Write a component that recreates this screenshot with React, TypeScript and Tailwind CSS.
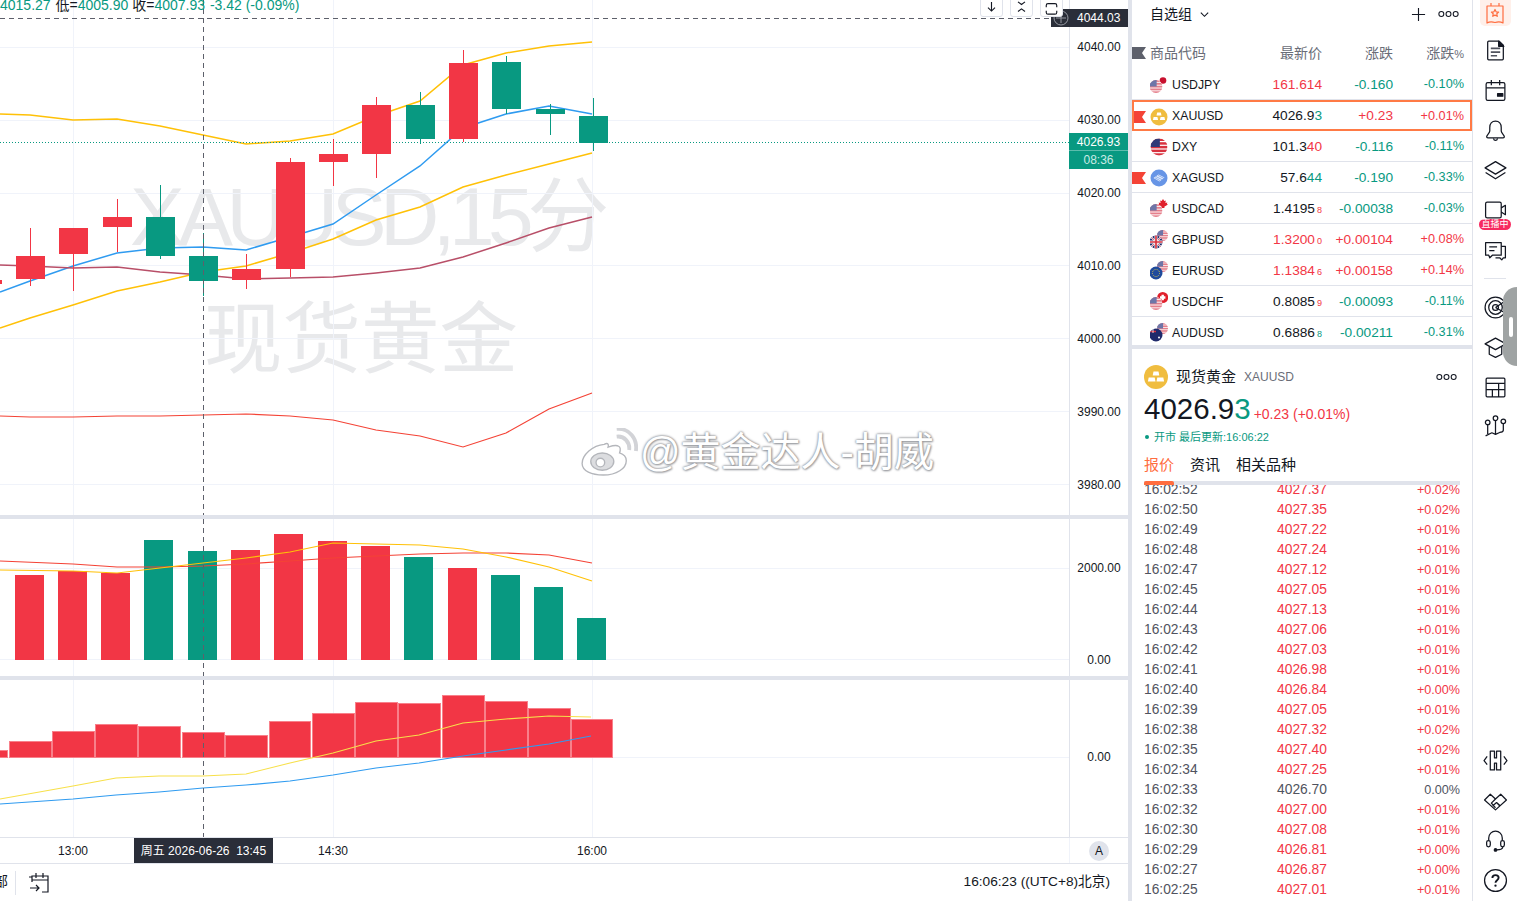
import React, { useId } from 'react';

const RED = '#f23645';
const GREEN = '#089981';
const YELLOW = '#ffc107';
const BLUE = '#2f9bf0';

type Candle = { x: number; hi: number; lo: number; top: number; bot: number; up: boolean };

const candles: Candle[] = [
  { x: 30, hi: 228, lo: 286, top: 256, bot: 279, up: true },
  { x: 73, hi: 228, lo: 291, top: 228, bot: 254, up: true },
  { x: 117, hi: 199, lo: 252, top: 217, bot: 227, up: true },
  { x: 160, hi: 185, lo: 259, top: 217, bot: 256, up: false },
  { x: 203, hi: 233, lo: 296, top: 256, bot: 281, up: false },
  { x: 246, hi: 254, lo: 289, top: 269, bot: 280, up: true },
  { x: 290, hi: 158, lo: 277, top: 162, bot: 269, up: true },
  { x: 333, hi: 139, lo: 186, top: 154, bot: 162, up: true },
  { x: 376, hi: 97, lo: 178, top: 105, bot: 154, up: true },
  { x: 420, hi: 92, lo: 144, top: 105, bot: 139, up: false },
  { x: 463, hi: 50, lo: 142, top: 63, bot: 139, up: true },
  { x: 506, hi: 56, lo: 114, top: 62, bot: 109, up: false },
  { x: 550, hi: 104, lo: 135, top: 109, bot: 114, up: false },
  { x: 593, hi: 98, lo: 151, top: 116, bot: 143, up: false },
];

const volumes: [number, number, boolean][] = [
  [15, 575, true], [58, 571, true], [101, 573, true], [144, 540, false], [188, 551, false],
  [231, 550, true], [274, 534, true], [318, 541, true], [361, 546, true], [404, 557, false],
  [448, 568, true], [491, 575, false], [534, 587, false], [577, 618, false],
];

const macd: [number, number, number][] = [
  [-35, 7, 750], [9, 51, 741], [52, 94, 731], [95, 137, 724], [138, 180, 726], [182, 224, 732], [225, 267, 735],
  [269, 310, 721], [312, 354, 713], [355, 397, 702], [398, 440, 703], [442, 484, 695], [485, 527, 701],
  [528, 570, 708], [571, 612, 719],
];

const bbUpper = '0,114 30,115 73,120 117,119 160,126 203,135 246,144 290,141 333,134 376,116 420,101 463,65 506,53 549,46 592,42';
const bbMid = '0,292 30,281 73,266 117,253 160,248 203,247 246,250 290,237 333,224 376,195 420,166 463,128 506,114 549,106 592,114';
const bbLower = '0,328 30,318 73,305 117,291 160,282 203,272 246,266 290,253 333,239 376,220 420,207 463,187 506,175 549,164 592,153';
const maLine = '0,265 30,266 73,268 117,267 160,272 203,275 246,279 290,278 333,277 376,273 420,268 463,257 506,243 549,228 592,217';
const redLine = '0,416 30,417 73,417 117,416 160,416 203,415 246,414 290,416 333,420 376,430 420,436 463,447 506,433 549,409 592,393';
const volRed = '0,561 73,564 117,567 160,567 203,566 246,564 290,561 333,558 376,556 420,554 463,553 506,553 549,555 592,563';
const volYellow = '0,570 73,571 117,573 160,568 203,563 246,558 290,552 333,543 376,544 420,545 463,549 506,557 549,567 592,581';
const macdYellow = '0,799 73,786 116,778 159,776 203,776 246,774 290,763 333,753 376,741 419,735 463,723 506,719 549,716 591,717';
const macdBlue = '0,804 73,799 116,795 159,792 203,788 246,785 290,781 333,775 376,768 419,763 463,756 506,750 549,744 591,736';

const VGrid = ({ y1, y2 }: { y1: number; y2: number }) => (
  <>
    {[73, 333, 592].map(x => (
      <line key={x} x1={x + 0.5} x2={x + 0.5} y1={y1} y2={y2} stroke="#f0f3fa" />
    ))}
  </>
);

const HGrid = ({ ys }: { ys: number[] }) => (
  <>
    {ys.map(y => (
      <line key={y} x1={0} x2={1069} y1={y + 0.5} y2={y + 0.5} stroke="#f0f3fa" />
    ))}
  </>
);

const Crosshair = ({ y1, y2 }: { y1: number; y2: number }) => (
  <line x1={203.5} x2={203.5} y1={y1} y2={y2} stroke="#5d606b" strokeDasharray="5 4" />
);

// ---- Symbol flags ----
const UsFlag = ({ x, y, r, faded }: { x: number; y: number; r: number; faded?: boolean }) => {
  const id = useId();
  const stripes = faded ? '#e57f8b' : '#d8323f';
  const canton = faded ? '#6d76a8' : '#2f3a78';
  return (
    <g>
      <clipPath id={id}>
        <circle cx={x} cy={y} r={r} />
      </clipPath>
      <g clipPath={`url(#${id})`}>
        <rect x={x - r} y={y - r} width={r * 2} height={r * 2} fill="#fff" />
        {[0, 1, 2, 3, 4].map(i => (
          <rect key={i} x={x - r} y={y - r + (i * 2 * r) / 4.6} width={r * 2} height={r / 3.4} fill={stripes} />
        ))}
        <rect x={x - r} y={y - r} width={r * 1.1} height={r} fill={canton} />
      </g>
    </g>
  );
};

const FlagIcon = ({ code }: { code: string }) => {
  const id = useId();
  let body: React.ReactNode = null;
  if (code === 'USDJPY') {
    body = (
      <>
        <circle cx={13} cy={5.5} r={4.5} fill="#fff" />
        <circle cx={13} cy={5.5} r={3.3} fill="#c8102e" />
        <UsFlag x={6} y={11.5} r={6.5} faded />
      </>
    );
  } else if (code === 'DXY') {
    body = <UsFlag x={9} y={10} r={8.5} />;
  } else if (code === 'XAUUSD') {
    body = (
      <>
        <circle cx={9} cy={10} r={8.5} fill="#f0bd3f" />
        <path d="M7.2 5.6h3.6l.7 3H6.5zM3.6 10h3.8l.7 3H2.9zM10.6 10h3.8l.7 3h-5.2z" fill="#fff" />
      </>
    );
  } else if (code === 'XAGUSD') {
    body = (
      <>
        <circle cx={9} cy={10} r={8.5} fill="#6795e6" />
        <path d="M3.5 10l5-3.6 6 3.2-5 3.8z" fill="#e8effc" />
        <path d="M6 8.6l6 3M8 7.4l6 3M5 9.8l5 2.8" stroke="#6795e6" strokeWidth={0.7} />
      </>
    );
  } else if (code === 'USDCAD') {
    body = (
      <>
        <path d="M13 0l1.300 2 1.500-.6-.4 2.600 1.900-.5-.4 1.500 1.100.6-3.700 2.200.2 1.200h-3l.2-1.200-3.700-2.200 1.100-.6-.4-1.500 1.900.5-.4-2.600 1.500.6z" fill="#e0202c" />
        <UsFlag x={6} y={11.5} r={6.5} faded />
      </>
    );
  } else if (code === 'USDCHF') {
    body = (
      <>
        <circle cx={12.7} cy={5.5} r={5.5} fill="#e0202c" />
        <path d="M11.500 2.800h2.400v1.500h1.500v2.400h-1.500v1.500h-2.400V6.700h-1.500V4.300h1.500z" fill="#fff" />
        <UsFlag x={6} y={11.5} r={6.5} faded />
      </>
    );
  } else {
    const r = 6.5;
    const cx = 6;
    const cy = 12;
    body = (
      <>
        <UsFlag x={12.5} y={5.5} r={5.5} faded />
        <clipPath id={id}>
          <circle cx={cx} cy={cy} r={r} />
        </clipPath>
        <g clipPath={`url(#${id})`}>
          {code === 'GBPUSD' && (
            <>
              <rect x={-1} y={5} width={14} height={14} fill="#1f2a6b" />
              <path d="M-1 5l14 14M13 5L-1 19" stroke="#fff" strokeWidth={1.800} />
              <path d="M-1 5l14 14M13 5L-1 19" stroke="#d8323f" strokeWidth={0.7} />
              <path d="M6 5v14M-1 12h14" stroke="#fff" strokeWidth={3} />
              <path d="M6 5v14M-1 12h14" stroke="#d8323f" strokeWidth={1.700} />
            </>
          )}
          {code === 'EURUSD' && (
            <>
              <rect x={-1} y={5} width={14} height={14} fill="#1f4a9c" />
              <circle cx={cx} cy={cy} r={3.600} fill="none" stroke="#e3c94a" strokeWidth={0.9} strokeDasharray="1 1" />
            </>
          )}
          {code === 'AUDUSD' && (
            <>
              <rect x={-1} y={5} width={14} height={14} fill="#1f2a6b" />
              <path d="M-1 8.500h7" stroke="#d8323f" strokeWidth={1.300} />
              <path d="M3 5v5" stroke="#f1f1f1" strokeWidth={0.9} />
              <circle cx={9} cy={14.500} r={1} fill="#fff" />
            </>
          )}
        </g>
      </>
    );
  }
  return (
    <svg viewBox="0 0 18 20" className="w-[18px] h-[20px] shrink-0">
      {body}
    </svg>
  );
};

const Marker = ({ color }: { color: string }) => (
  <svg viewBox="0 0 14 12" className="w-[14px] h-[12px] shrink-0">
    <path d="M0 0h14l-4 6 4 6H0z" fill={color} />
  </svg>
);

// ---- Watchlist ----
type Seg = { t: string; c: string; small?: boolean };
type Row = { code: string; price: Seg[]; chg: string; pct: string; up: boolean; flag?: boolean };

const K = '#131722';
const rows: Row[] = [
  { code: 'USDJPY', price: [{ t: '161.614', c: RED }], chg: '-0.160', pct: '-0.10%', up: false },
  { code: 'XAUUSD', price: [{ t: '4026.9', c: K }, { t: '3', c: GREEN }], chg: '+0.23', pct: '+0.01%', up: true, flag: true },
  { code: 'DXY', price: [{ t: '101.3', c: K }, { t: '40', c: RED }], chg: '-0.116', pct: '-0.11%', up: false },
  { code: 'XAGUSD', price: [{ t: '57.6', c: K }, { t: '44', c: GREEN }], chg: '-0.190', pct: '-0.33%', up: false, flag: true },
  { code: 'USDCAD', price: [{ t: '1.4195', c: K }, { t: '8', c: RED, small: true }], chg: '-0.00038', pct: '-0.03%', up: false },
  { code: 'GBPUSD', price: [{ t: '1.3200', c: RED }, { t: '0', c: RED, small: true }], chg: '+0.00104', pct: '+0.08%', up: true },
  { code: 'EURUSD', price: [{ t: '1.1384', c: RED }, { t: '6', c: RED, small: true }], chg: '+0.00158', pct: '+0.14%', up: true },
  { code: 'USDCHF', price: [{ t: '0.8085', c: K }, { t: '9', c: RED, small: true }], chg: '-0.00093', pct: '-0.11%', up: false },
  { code: 'AUDUSD', price: [{ t: '0.6886', c: K }, { t: '8', c: GREEN, small: true }], chg: '-0.00211', pct: '-0.31%', up: false },
];

const ticks: [string, string, string][] = [
  ['16:02:52', '4027.37', '+0.02%'], ['16:02:50', '4027.35', '+0.02%'], ['16:02:49', '4027.22', '+0.01%'],
  ['16:02:48', '4027.24', '+0.01%'], ['16:02:47', '4027.12', '+0.01%'], ['16:02:45', '4027.05', '+0.01%'],
  ['16:02:44', '4027.13', '+0.01%'], ['16:02:43', '4027.06', '+0.01%'], ['16:02:42', '4027.03', '+0.01%'],
  ['16:02:41', '4026.98', '+0.01%'], ['16:02:40', '4026.84', '+0.00%'], ['16:02:39', '4027.05', '+0.01%'],
  ['16:02:38', '4027.32', '+0.02%'], ['16:02:35', '4027.40', '+0.02%'], ['16:02:34', '4027.25', '+0.01%'],
  ['16:02:33', '4026.70', '0.00%'], ['16:02:32', '4027.00', '+0.01%'], ['16:02:30', '4027.08', '+0.01%'],
  ['16:02:29', '4026.81', '+0.00%'], ['16:02:27', '4026.87', '+0.00%'], ['16:02:25', '4027.01', '+0.01%'],
];

const WatchRow = ({ row }: { row: Row }) => {
  const selected = row.code === 'XAUUSD';
  const chgColor = row.up ? 'text-[#f23645]' : 'text-[#089981]';
  return (
    <div
      className={`flex items-center h-[31px] shrink-0 pt-[2px] pr-[8px] text-[13.7px] ${
        selected ? 'outline-2 -outline-offset-2 outline-[#ff7a45]' : 'border-b border-[#e0e3eb]'
      }`}
    >
      <div className="w-[18px] shrink-0">{row.flag && <Marker color="#f44336" />}</div>
      <FlagIcon code={row.code} />
      <span className="ml-[4px] text-[#131722] text-[12.3px]">{row.code}</span>
      <span className="flex-1 text-right flex justify-end items-baseline">
        {row.price.map((s, i) => (
          <span key={i} className={s.small ? 'text-[9px] ml-[2px]' : ''} style={{ color: s.c }}>
            {s.t}
          </span>
        ))}
      </span>
      <span className={`w-[71px] shrink-0 text-right ${chgColor}`}>{row.chg}</span>
      <span className={`w-[71px] shrink-0 text-right text-[12.7px] ${chgColor}`}>{row.pct}</span>
    </div>
  );
};

// ---- Right rail icons ----
const RailIcon = ({ h = 40, children, w = 25 }: { h?: number; w?: number; children: React.ReactNode }) => (
  <div className="flex items-center justify-center shrink-0" style={{ height: h }}>
    <svg viewBox="0 0 24 24" width={w} height={w} fill="none" stroke="#131722" strokeWidth={1.200} strokeLinejoin="round">
      {children}
    </svg>
  </div>
);

const Rail = () => (
  <div className="relative w-[45px] shrink-0 border-l border-[#e0e3eb] flex flex-col items-center bg-white">
    <div className="w-[31px] h-[26px] bg-[#fff0ea] rounded-b-[5px] flex items-end justify-center shrink-0">
      <svg viewBox="0 0 22 24" width={22} height={24} fill="none" stroke="#ff6d3f" strokeWidth={1.200} strokeLinejoin="round">
        <path d="M3 4h16v17c-2.500-1.500-5-1.500-8-.5-3-1-5.500-1-8 .5z" />
        <path d="M7 4V1M15 4V1" />
        <path d="M11 7.500l1.100 2.300 2.500.3-1.800 1.700.5 2.500-2.300-1.200-2.300 1.200.5-2.500-1.800-1.700 2.500-.3z" />
      </svg>
    </div>
    <RailIcon h={48}>
      <path d="M4.500 4a1 1 0 011-1h10l4 4v13a1 1 0 01-1 1h-13a1 1 0 01-1-1z" />
      <path d="M15 3l5 5h-5z" fill="#131722" />
      <path d="M7.500 10h9M7.500 13.500h9M7.500 17h6" strokeWidth={1.600} stroke="#50535e" />
    </RailIcon>
    <RailIcon h={32}>
      <rect x={3} y={4.500} width={18} height={17} rx={1.500} />
      <path d="M3 9.500h18M8 2v5M16 2v5" />
      <rect x={14} y={15} width={5} height={2.500} fill="#131722" />
    </RailIcon>
    <RailIcon h={48}>
      <path d="M12 3c-3.500 0-5.500 2.700-5.500 6v3.500c0 2-3 3.700-3 5.500 0 .7.500 1 1.200 1h14.600c.7 0 1.200-.3 1.200-1 0-1.800-3-3.500-3-5.500V9c0-3.300-2-6-5.500-6z" />
      <path d="M10 19.500c.3 1.300 1 2 2 2s1.700-.7 2-2" />
    </RailIcon>
    <RailIcon h={32}>
      <path d="M12 3.500l10 6-10 6-10-6z" />
      <path d="M2.500 14l9.500 6 9.500-6" />
    </RailIcon>
    <RailIcon h={48}>
      <rect x={2.500} y={4} width={15} height={15} rx={1.500} />
      <path d="M17.500 9.500l4-2.500v9l-4-2.500" />
    </RailIcon>
    <div className="-mt-[15px] w-[32px] h-[11px] rounded-full bg-[#f7295f] text-white text-[9px] leading-[11px] text-center shrink-0">
      直播中
    </div>
    <RailIcon h={40}>
      <path d="M2.500 4.500h15v12H9l-2.500 2.500-1-2.500h-3z" />
      <path d="M6 8.500h7.500M6 12h5" />
      <path d="M17.500 8h4v11h-2l-1.500 2-2-2h-4" />
    </RailIcon>
    <div className="w-[22px] border-t border-[#e0e3eb] mt-[8px] shrink-0" />
    <RailIcon h={56}>
      <circle cx={12} cy={12} r={10} />
      <circle cx={12} cy={12} r={6.500} />
      <circle cx={12} cy={12} r={2.800} />
      <path d="M12 12l9-6M12 12l9 5" stroke="#131722" />
    </RailIcon>
    <RailIcon h={24}>
      <path d="M12 3l10 5.500L12 14 2 8.500z" />
      <path d="M6 11v7.500l6 3 6-3V11" />
    </RailIcon>
    <RailIcon h={56}>
      <rect x={3} y={3} width={18} height={18} rx={1} />
      <path d="M3 8h18M3 14h18M9 14v7M15 8v13" />
    </RailIcon>
    <RailIcon h={20}>
      <circle cx={4.500} cy={9} r={2.200} />
      <circle cx={12} cy={5} r={2.200} />
      <circle cx={19.500} cy={8} r={2.200} />
      <path d="M4.500 11.200v9M12 7.200v13.300M19.500 10.200v6.300c0 1.500-2 2-3.500 2.200L12 20.500l-3.500-1.500-6 3" />
    </RailIcon>
    <div className="flex-1" />
    <RailIcon h={40}>
      <path d="M7 3h4v6.500h2V3h4v18h-4v-6.500h-2V21H7z" />
      <path d="M4 8l-3 4 3 4M20 8l3 4-3 4" />
    </RailIcon>
    <RailIcon h={40}>
      <path d="M12 21L1.500 11.500 7 6l5 4.500 5-4.500 5.500 5.500z" />
      <path d="M12 10.500l-4 4 2 2 3-2.500 3 3M9 16l3 3M13 14l3.500 3" />
    </RailIcon>
    <RailIcon h={40}>
      <path d="M5.500 12V9.500a6.500 6.500 0 0113 0V12" />
      <rect x={3.500} y={12} width={3.500} height={6} rx={1.700} />
      <rect x={17} y={12} width={3.500} height={6} rx={1.700} />
      <path d="M19 18c0 2-2.500 3-6 3" />
      <circle cx={12} cy={21} r={1.200} fill="#131722" />
    </RailIcon>
    <RailIcon h={40}>
      <circle cx={12} cy={12} r={10.500} />
      <path d="M9 9.500C9 7.700 10.300 6.800 12 6.800s3 1 3 2.600c0 2.300-3 2.300-3 4.800" strokeWidth={1.800} />
      <circle cx={12} cy={17} r={1.100} fill="#131722" stroke="none" />
    </RailIcon>
    <div className="h-[1px] shrink-0" />
    <div className="absolute right-0 top-[287px] w-[14px] h-[79px] bg-[#9fa3a3] rounded-l-[14px] flex items-center justify-center">
      <div className="w-[4px] h-[20px] rounded-full bg-white ml-[1px]" />
    </div>
  </div>
);

const axisLabel = 'text-[12px] text-[#131722] text-center';

const MainPane = () => (
  <div className="flex h-[515px] shrink-0 relative overflow-hidden">
    <div className="relative w-[1069px] shrink-0 overflow-hidden">
      <div className="absolute left-[130px] top-[172px] text-[82px] tracking-[-6.5px] leading-[90px] text-[#e8e9eb] whitespace-nowrap">
        XAUUSD,15分
      </div>
      <div className="absolute left-[204px] top-[295px] text-[78.5px] leading-[90px] text-[#e8e9eb] whitespace-nowrap">
        现货黄金
      </div>
      <svg viewBox="0 0 1069 515" className="absolute inset-0 w-[1069px] h-[515px]">
        <HGrid ys={[47, 120, 193, 265, 338, 411, 484]} />
        <VGrid y1={0} y2={515} />
        <rect x={0} y={280} width={2} height={4} fill={RED} />
        <polyline points={bbUpper} fill="none" stroke={YELLOW} strokeWidth={1.500} />
        <polyline points={bbMid} fill="none" stroke={BLUE} strokeWidth={1.500} />
        <polyline points={bbLower} fill="none" stroke={YELLOW} strokeWidth={1.500} />
        <polyline points={maLine} fill="none" stroke="#b84f68" strokeWidth={1.500} />
        <polyline points={redLine} fill="none" stroke="#f44336" strokeWidth={1.200} />
        <line x1={0} x2={1069} y1={142.5} y2={142.5} stroke={GREEN} strokeDasharray="1 2" />
        {candles.map(c => (
          <g key={c.x} fill={c.up ? RED : GREEN}>
            <rect x={c.x} y={c.hi} width={1} height={c.lo - c.hi} />
            <rect x={c.x - 14} y={c.top} width={29} height={c.bot - c.top} />
          </g>
        ))}
        <line x1={0} x2={1052} y1={18.5} y2={18.5} stroke="#5d606b" strokeDasharray="5 4" />
        <Crosshair y1={0} y2={515} />
      </svg>
      <div className="absolute left-0 -top-[3px] text-[14px] leading-[16px] whitespace-nowrap text-[#089981]">
        4015.27 <span className="text-[#131722] ml-[1px]">低=</span>4005.90 <span className="text-[#131722]">收=</span>4007.93 <span className="ml-[1px]">-3.42 (-0.09%)</span>
      </div>
    </div>
    <div className="w-[59px] shrink-0 border-l border-[#e0e3eb] flex flex-col pt-[10px]">
      {['4040.00', '4030.00', '4020.00', '4010.00', '4000.00', '3990.00', '3980.00'].map(v => (
        <div key={v} className={`h-[73px] shrink-0 flex items-center justify-center ${axisLabel}`}>{v}</div>
      ))}
    </div>
    <div className="absolute left-[1051px] top-[9px] w-[77px] h-[18px] bg-[#2a2e39] flex items-center text-white text-[12px]">
      <svg viewBox="0 0 16 16" width={16} height={16} fill="none" stroke="#9598a1" strokeWidth={1} className="ml-[2px]">
        <circle cx={8} cy={8} r={7} />
        <path d="M8 3v10M3 8h10" />
      </svg>
      <span className="ml-[8px]">4044.03</span>
    </div>
    <div className="absolute left-[980px] -top-[8px] flex gap-[7px]">
      {['M12 1v10.500M8 7.500l4 4 4-4', 'M8 1l4 3 4-3M8 12l4-3 4 3', 'M6 7V5a2 2 0 012-2h8a2 2 0 012 2v2M6 11v2a2 2 0 002 2h8a2 2 0 002-2v-2'].map(d => (
        <div key={d} className="w-[23px] h-[25px] bg-white border border-[#e0e3eb] rounded-[3px] flex items-end justify-center">
          <svg viewBox="0 0 24 16" width={24} height={16} fill="none" stroke="#131722" strokeWidth={1.300}>
            <path d={d} />
          </svg>
        </div>
      ))}
    </div>
    <div className="absolute left-[1069px] top-[133px] w-[59px] h-[36px] bg-[#089981] flex flex-col text-[12px] text-center">
      <div className="h-[18px] leading-[18px] text-white border-b border-[#5cbcac]">4026.93</div>
      <div className="h-[18px] leading-[18px] text-[#c9ebe5]">08:36</div>
    </div>
  </div>
);

const VolumePane = () => (
  <div className="flex h-[157px] shrink-0">
    <svg viewBox="0 519 1069 157" className="block w-[1069px] h-[157px] shrink-0">
      <HGrid ys={[568, 659]} />
      <VGrid y1={519} y2={676} />
      {volumes.map(([x, top, up]) => (
        <rect key={x} x={x} y={top} width={29} height={660 - top} fill={up ? RED : GREEN} />
      ))}
      <polyline points={volRed} fill="none" stroke="#f44336" strokeWidth={1.200} />
      <polyline points={volYellow} fill="none" stroke={YELLOW} strokeWidth={1.200} />
      <Crosshair y1={519} y2={676} />
    </svg>
    <div className="w-[59px] shrink-0 border-l border-[#e0e3eb] flex flex-col pt-[40px]">
      <div className={`h-[18px] leading-[18px] ${axisLabel}`}>2000.00</div>
      <div className={`h-[18px] leading-[18px] mt-[74px] ${axisLabel}`}>0.00</div>
    </div>
  </div>
);

const MacdPane = () => (
  <div className="flex h-[157px] shrink-0">
    <svg viewBox="0 680 1069 157" className="block w-[1069px] h-[157px] shrink-0">
      <HGrid ys={[757]} />
      <VGrid y1={680} y2={837} />
      {macd.map(([x1, x2, top]) => (
        <rect key={x1} x={x1 + 0.5} y={top + 0.5} width={x2 - x1} height={757 - top} fill={RED} stroke="#f8808a" strokeWidth={1} />
      ))}
      <polyline points={macdYellow} fill="none" stroke="#f7e04a" strokeWidth={1.200} />
      <polyline points={macdBlue} fill="none" stroke={BLUE} strokeWidth={1.200} />
      <Crosshair y1={680} y2={837} />
    </svg>
    <div className="w-[59px] shrink-0 border-l border-[#e0e3eb] flex flex-col pt-[68px]">
      <div className={`h-[18px] leading-[18px] ${axisLabel}`}>0.00</div>
    </div>
  </div>
);

const TimeAxis = () => (
  <div className="flex h-[27px] shrink-0 border-y border-[#e0e3eb]">
    <div className="relative w-[1069px] shrink-0 text-[12px] text-[#131722]">
      {[['13:00', 73], ['14:30', 333], ['16:00', 592]].map(([t, x]) => (
        <span key={t} className="absolute top-[4px] -translate-x-1/2" style={{ left: x as number }}>{t}</span>
      ))}
      <div className="absolute left-[134px] top-0 w-[139px] h-[25px] bg-[#2a2e39] text-white flex items-center justify-center whitespace-pre">
        周五 2026-06-26  13:45
      </div>
    </div>
    <div className="w-[59px] shrink-0 border-l border-[#f0f3fa] flex items-center justify-center">
      <div className="w-[20px] h-[20px] rounded-full bg-[#e0e3eb] text-[12px] flex items-center justify-center text-[#131722]">A</div>
    </div>
  </div>
);

const BottomBar = () => (
  <div className="flex-1 flex items-center text-[13.7px] text-[#131722] overflow-hidden">
    <div className="w-[16px] h-[24px] border-r border-[#e0e3eb] flex items-center justify-end pr-[7px] overflow-hidden shrink-0">
      <span className="shrink-0">部</span>
    </div>
    <svg viewBox="0 0 22 22" width={22} height={22} fill="none" stroke="#131722" strokeWidth={1.200} className="ml-[12px]">
      <path d="M4 10V4h16v16h-6M1 5h3M8 1v5M15 1v5M4 8h16" />
      <path d="M2 16h9M8 13l3 3-3 3" />
    </svg>
    <div className="flex-1" />
    <span className="mr-[18px]">16:06:23 ((UTC+8)北京)</span>
  </div>
);

const Dots = () => (
  <svg viewBox="0 0 22 8" width={21} height={8} fill="none" stroke="#131722" strokeWidth={1.100}>
    <circle cx={3.500} cy={4} r={2.600} />
    <circle cx={11} cy={4} r={2.600} />
    <circle cx={18.500} cy={4} r={2.600} />
  </svg>
);

const WeiboMark = () => (
  <div className="absolute left-[580px] top-[428px] flex items-center pointer-events-none">
    <svg viewBox="0 0 60 50" width={58} height={48} fill="#fff" stroke="#b4b6bb" strokeWidth={1.400}>
      <path d="M25 17c-12 1-23 11-23 20 0 8 10 12 22 12 14 0 24-7 24-15 0-5-4-7-7-8 1-3 1-6-1-7-3-2-8 0-11 1 1-3 0-5-4-3z" />
      <ellipse cx={23} cy={35} rx={12} ry={9} fill="#dcdde0" />
      <circle cx={21} cy={36} r={4.500} fill="#fff" />
      <path d="M38 9c8-1 14 6 13 14M38 1c13-1 22 10 20 23" fill="none" strokeWidth={4} stroke="#d2d3d7" />
    </svg>
    <span
      className="ml-[2px] text-[40px] leading-[48px] text-white whitespace-nowrap"
      style={{ textShadow: '0 0 3px #8f9196, 0 0 2px #8f9196, 1px 1px 2px #b0b2b6' }}
    >
      @黄金达人-胡威
    </span>
  </div>
);

const App: React.FC = () => {
  return (
    <div
      className="relative w-[1517px] h-[901px] overflow-hidden flex bg-white text-[#131722]"
      style={{ fontFamily: '"Liberation Sans", "Noto Sans CJK SC", sans-serif' }}
    >
      {/* Chart */}
      <div className="w-[1128px] shrink-0 flex flex-col">
        <MainPane />
        <div className="h-[4px] bg-[#e0e3eb] shrink-0" />
        <VolumePane />
        <div className="h-[4px] bg-[#e0e3eb] shrink-0" />
        <MacdPane />
        <TimeAxis />
        <BottomBar />
      </div>
      <div className="w-[4px] shrink-0 bg-[#e0e3eb]" />

      {/* Watchlist + details */}
      <div className="w-[340px] shrink-0 flex flex-col overflow-hidden">
        <div className="h-[345px] shrink-0 overflow-hidden flex flex-col">
          <div className="h-[28px] shrink-0 flex items-center pl-[18px] pr-[13px] text-[14px]">
            <span>自选组</span>
            <svg viewBox="0 0 12 12" width={11} height={11} fill="none" stroke="#131722" strokeWidth={1.200} className="ml-[7px]">
              <path d="M2 4l4 4 4-4" />
            </svg>
            <div className="flex-1" />
            <svg viewBox="0 0 16 16" width={15} height={15} fill="none" stroke="#131722" strokeWidth={1.200} className="mr-[12px]">
              <path d="M8 1v14M1 8h14" />
            </svg>
            <Dots />
          </div>
          <div className="h-[41px] shrink-0 flex items-center pt-[9px] pr-[8px] text-[14px] text-[#6a6d78]">
            <div className="w-[18px] shrink-0"><Marker color="#5d606b" /></div>
            <span>商品代码</span>
            <span className="flex-1 text-right">最新价</span>
            <span className="w-[71px] shrink-0 text-right">涨跌</span>
            <span className="w-[71px] shrink-0 text-right">涨跌<span className="text-[11px]">%</span></span>
          </div>
          {rows.map(r => <WatchRow key={r.code} row={r} />)}
        </div>
        <div className="h-[4px] bg-[#e0e3eb] shrink-0" />

        <div className="flex items-center mt-[16px] pl-[12px] pr-[15px] h-[24px] shrink-0">
          <svg viewBox="0 0 24 24" width={24} height={24} className="shrink-0">
            <circle cx={12} cy={12} r={12} fill="#f0bd3f" />
            <path d="M9.500 6.500h5l.8 4H8.700zM4.700 12.500h6l.8 4H3.900zM13.300 12.500h6l.8 4h-7.600z" fill="#fff" />
          </svg>
          <span className="ml-[8px] text-[15px]">现货黄金</span>
          <span className="ml-[8px] text-[12px] text-[#6a6d78]">XAUUSD</span>
          <div className="flex-1" />
          <Dots />
        </div>
        <div className="flex items-baseline pl-[12px] mt-[3px] h-[34px] shrink-0">
          <span className="text-[29.5px] leading-[34px]">4026.9<span className="text-[#089981]">3</span></span>
          <span className="ml-[3px] text-[14px] text-[#f23645]">+0.23 (+0.01%)</span>
        </div>
        <div className="flex items-center pl-[13px] mt-[3px] h-[16px] text-[11px] text-[#089981] shrink-0">
          <span className="w-[4px] h-[4px] rounded-full bg-[#089981] mr-[5px]" />
          开市 最后更新:16:06:22
        </div>
        <div className="flex items-center pl-[12px] mt-[10px] h-[20px] gap-[16px] text-[15px] shrink-0">
          <span className="text-[#ff6d3f]">报价</span>
          <span>资讯</span>
          <span>相关品种</span>
        </div>
        <div className="relative z-10 ml-[12px] mr-[12px] mt-[6px] h-[4px] bg-[#e0e3eb] shrink-0">
          <div className="w-[30px] h-[4px] bg-[#ff6d3f] rounded-t-[2px]" />
        </div>
        <div className="flex-1 overflow-hidden pl-[12px] pr-[12px] -mt-[5px] text-[13.8px]">
          {ticks.map(([t, p, c]) => {
            const flat = c === '0.00%';
            return (
              <div key={t} className="flex items-center h-[20px]">
                <span className="w-[120px] shrink-0 text-[#50535e]">{t}</span>
                <span className={`w-[76px] shrink-0 text-center ${flat ? 'text-[#50535e]' : 'text-[#f23645]'}`}>{p}</span>
                <span className={`flex-1 text-right text-[12.6px] ${flat ? 'text-[#50535e]' : 'text-[#f23645]'}`}>{c}</span>
              </div>
            );
          })}
        </div>
      </div>

      <Rail />
      <WeiboMark />
    </div>
  );
};

export default App;
